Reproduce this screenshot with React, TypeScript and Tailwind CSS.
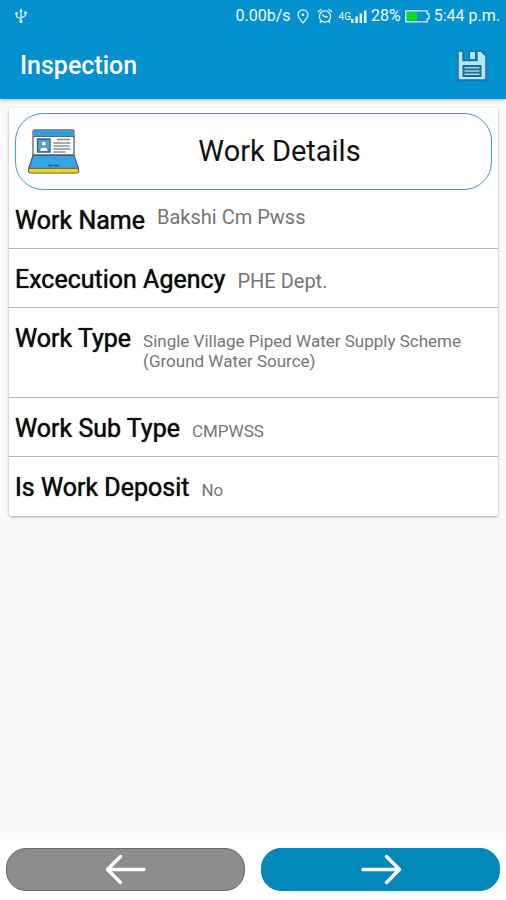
import React from "react";

type Detail = { label: string; value: string; row: string; text: string };

const details: Detail[] = [
  { label: "Work Name", value: "Bakshi Cm Pwss", row: "h-[59px] items-start", text: "text-[20px] leading-6" },
  { label: "Excecution Agency", value: "PHE Dept.", row: "h-[59px] items-baseline", text: "text-[20px] leading-6" },
  { label: "Work Type", value: "Single Village Piped Water Supply Scheme (Ground Water Source)", row: "h-[90px] items-baseline", text: "text-[17px] leading-5" },
  { label: "Work Sub Type", value: "CMPWSS", row: "h-[59px] items-baseline", text: "text-[17px] leading-5" },
  { label: "Is Work Deposit", value: "No", row: "h-[59px] items-baseline", text: "text-[17px] leading-5" },
];

function UsbIcon() {
  return (
    <svg width="14" height="16" viewBox="0 0 14 16" fill="none" stroke="#d9f0fb" strokeWidth="1.3" aria-hidden="true">
      <path d="M7 2v11M7 11L2.500 8.500V6M7 10l4.500-2.500V5" />
      <path d="M5 3.500L7 .5l2 3z" fill="#d9f0fb" stroke="none" />
      <circle cx="7" cy="13.500" r="1.700" fill="#d9f0fb" stroke="none" />
      <circle cx="2.500" cy="5.500" r="1.400" fill="#d9f0fb" stroke="none" />
      <path d="M10.200 3.500h2.600v2.600h-2.600z" fill="#d9f0fb" stroke="none" />
    </svg>
  );
}

function PinIcon() {
  return (
    <svg width="12" height="15" viewBox="0 0 12 15" fill="none" stroke="#e6f5fc" strokeWidth="1.200" aria-hidden="true">
      <path d="M6 14C3.500 10.800 1 8.500 1 5.800a5 5 0 0 1 10 0C11 8.500 8.500 10.800 6 14z" />
      <circle cx="6" cy="5.800" r="1.300" fill="#e6f5fc" stroke="none" />
    </svg>
  );
}

function AlarmIcon() {
  return (
    <svg width="16" height="16" viewBox="0 0 16 16" fill="none" stroke="#e6f5fc" strokeWidth="1.300" strokeLinecap="round" aria-hidden="true">
      <circle cx="8" cy="8.500" r="5.600" />
      <path d="M1.200 3.800L4 1.400M14.800 3.800L12 1.400M5.500 7l2.800 2 2.200-.2M4.500 13l-1.300 1.500M11.500 13l1.300 1.500" />
    </svg>
  );
}

function SignalIcon() {
  return (
    <svg width="16" height="13" viewBox="0 0 16 13" fill="#f2fafe" aria-hidden="true">
      <path d="M0 9h2.500v4H0zM4.300 6.500h2.500V13H4.300zM8.600 3.500h2.500V13H8.600zM13 .5h2.500V13H13z" />
    </svg>
  );
}

function BatteryIcon() {
  return (
    <svg width="25" height="13" viewBox="0 0 25 13" aria-hidden="true">
      <path d="M.8.800h21.400v3h1.800v5h-1.800v3H.8z" fill="none" stroke="#dff1fa" strokeWidth="1.300" />
      <path d="M2 2h10v8.600H2z" fill="#0fdc1c" />
    </svg>
  );
}

function SaveIcon() {
  return (
    <svg width="30" height="31" viewBox="0 0 30 31" aria-hidden="true">
      <path
        d="M2 1h4v9.500h14V1h4l5 5v22.500a1.500 1.500 0 0 1-1.500 1.500h-25A1.500 1.500 0 0 1 1 28.500V2a1 1 0 0 1 1-1z"
        fill="#b3e8fb"
        stroke="#1f6d98"
        strokeWidth="1.400"
      />
      <path d="M12.500 1.500h6v8h-6z" fill="#b3e8fb" stroke="#1f6d98" strokeWidth="1.200" />
      <path d="M5.500 15h19v12h-19z" fill="#1b6c92" />
      <path d="M7.500 17.800h15M7.500 21h15M7.500 24.200h15" stroke="#9edaf1" strokeWidth="1.600" />
    </svg>
  );
}

function LaptopIcon() {
  return (
    <svg width="52" height="48" viewBox="0 0 52 48" aria-hidden="true">
      <path d="M5 27V4q0-2 2-2h37q2 0 2 2v23z" fill="#f8fbfc" stroke="#5c6469" strokeWidth="1.300" />
      <path d="M5.500 8V4.200q0-1.700 1.700-1.700h36.600q1.700 0 1.700 1.700V8z" fill="#2d9de0" />
      <path d="M5 8.500h41" stroke="#536a77" />
      <path d="M5 27.500h41L50.500 40.500v3q0 1.500-1.500 1.500H2Q.6 45 .6 43.500v-3z" fill="#35a4e6" stroke="#435866" strokeWidth="1.200" />
      <path d="M1 40.500h49v3.200q0 .9-1 .9H2q-1 0-1-.9z" fill="#f7d312" />
      <path d="M.6 40.300h50" stroke="#59604b" />
      <path d="M20 37.500h12" stroke="#255a80" strokeWidth="1.400" strokeDasharray="5 1" />
      <path d="M9.500 11h12.500v13H9.500z" fill="#45a9e3" stroke="#315f82" strokeWidth="1.300" />
      <circle cx="15.800" cy="15.600" r="2.600" fill="#fff" stroke="#37576c" strokeWidth=".7" />
      <path d="M11.700 23.500v-1.200q0-3.200 4.100-3.200t4.100 3.200v1.200z" fill="#fff" stroke="#37576c" strokeWidth=".7" />
      <path d="M29 11.500h13M25.500 15h17M25.500 18h16M25.500 21h17M25.500 24h12" stroke="#868e92" strokeWidth="1.300" />
      <path d="M38 0v1.500M3 13v3M48 12v3M48 25v3M29 45.500v2" stroke="#e5dfa0" />
    </svg>
  );
}

function Arrow({ back = false }: { back?: boolean }) {
  return (
    <svg width="42" height="32" viewBox="0 0 42 32" fill="none" stroke="#fff" strokeWidth="3.500" strokeLinecap="round" strokeLinejoin="round" aria-hidden="true">
      {back ? <path d="M39 15.500H2.500M15.500 2.500l-13 13 13 13" /> : <path d="M3 15.500h36.500M26.500 2.500l13 13-13 13" />}
    </svg>
  );
}

export default function App() {
  return (
    <div className="flex min-h-screen flex-col bg-[#fafafa] font-[Roboto,sans-serif]">
      <header className="bg-[#0290cf] text-white shadow-[0_1px_4px_rgba(0,0,0,0.3)]">
        <div className="flex h-8 items-center justify-between pr-1.5 pl-3.5 text-[#f2fafe]">
          <UsbIcon />
          <div className="flex items-center text-[16px]">
            <span className="mr-1.5">0.00b/s</span>
            <PinIcon />
            <span className="ml-2"><AlarmIcon /></span>
            <span className="ml-1.5 text-[10px]">4G</span>
            <SignalIcon />
            <span className="mx-1">28%</span>
            <BatteryIcon />
            <span className="ml-1">5:44 p.m.</span>
          </div>
        </div>
        <div className="flex h-[67px] items-center justify-between pr-[19px] pl-5">
          <h1 className="text-[25px] font-medium">Inspection</h1>
          <button type="button" aria-label="Save"><SaveIcon /></button>
        </div>
      </header>

      <main className="flex-1 pt-[9px] pr-2 pl-[9px]">
        <section className="rounded-[2px] bg-white shadow-[0_1px_3px_rgba(0,0,0,0.35)]">
          <div className="px-1.5 pt-[5px]">
            <div className="flex h-[77px] items-center rounded-[28px] border border-[#3d9dc6] pl-3">
              <LaptopIcon />
              <h2 className="flex-1 pr-3 text-center text-[29px] text-[#111]">Work Details</h2>
            </div>
          </div>
          <dl>
            {details.map((item) => (
              <div key={item.label} className={`flex gap-3 border-b border-[#b5b5b5] px-1.5 pt-[15px] last:border-b-0 ${item.row}`}>
                <dt className="shrink-0 text-[25px] leading-8 text-[#0c0c0c] [text-shadow:0_0_1px_#0c0c0c]">{item.label}</dt>
                <dd className={`text-[#757575] ${item.text}`}>{item.value}</dd>
              </div>
            ))}
          </dl>
        </section>
      </main>

      <nav className="flex gap-4 bg-white px-1.5 py-[9px]" aria-label="Steps">
        <button type="button" aria-label="Previous" className="flex h-[43px] flex-1 items-center justify-center rounded-[20px] border border-[#696969] bg-[#8c8c8c]">
          <Arrow back />
        </button>
        <button type="button" aria-label="Next" className="flex h-[43px] flex-1 items-center justify-center rounded-[20px] border border-[#0287b6] bg-[#0287b6]">
          <Arrow />
        </button>
      </nav>
    </div>
  );
}
